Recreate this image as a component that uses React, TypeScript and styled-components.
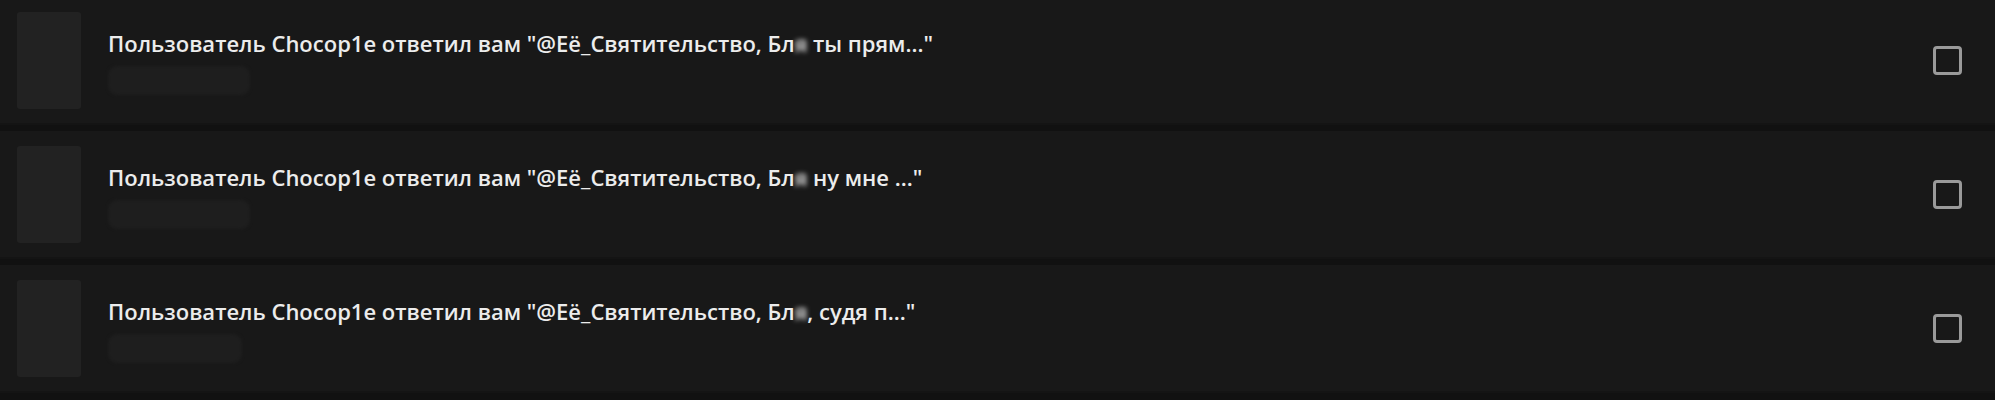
import React from "react";
import styled, { createGlobalStyle } from "styled-components";

const GlobalStyle = createGlobalStyle`
  html, body {
    margin: 0;
    padding: 0;
    background: #111111;
    overflow: hidden;
  }
  body {
    font-family: "Open Sans", "Noto Sans", sans-serif;
  }
`;

const List = styled.ul`
  list-style: none;
  margin: -3px 0 0;
  padding: 0;
  display: flex;
  flex-direction: column;
  gap: 6px;
  background: #111111;
`;

const Row = styled.li`
  height: 128px;
  box-sizing: border-box;
  display: flex;
  align-items: center;
  padding: 0 33px 0 17px;
  background: #181818;
  border-bottom: 2px solid #141414;
`;

const Thumb = styled.div`
  width: 64px;
  height: 97px;
  flex: none;
  border-radius: 3px;
  background: #222222;
`;

const Body = styled.div`
  flex: 1;
  min-width: 0;
  display: flex;
  flex-direction: column;
  gap: 9px;
  margin-left: 27px;
  margin-top: 4px;
`;

const Title = styled.div`
  font-size: 22px;
  line-height: 28px;
  font-weight: 600;
  color: #ececec;
  white-space: nowrap;
  letter-spacing: 0;
`;

const Censored = styled.span`
  display: inline-block;
  filter: blur(2.5px);
  opacity: 0.9;
  color: #ffffff;
`;

const Meta = styled.div<{ $w: number }>`
  width: ${(p) => p.$w}px;
  height: 29px;
  border-radius: 9px;
  background: #1e1e1e;
  filter: blur(1.5px);
`;

const Check = styled.span`
  width: 29px;
  height: 29px;
  flex: none;
  box-sizing: border-box;
  border: 3px solid #9a9a9a;
  border-radius: 4px;
`;

const items = [
  { tail: " ты прям...\"", meta: 142 },
  { tail: " ну мне ...\"", meta: 142 },
  { tail: ", судя п...\"", meta: 134 },
];

export default function App() {
  return (
    <>
      <GlobalStyle />
      <List>
        {items.map((it, i) => (
          <Row key={i}>
            <Thumb />
            <Body>
              <Title>
                Пользователь Chocop1e ответил вам "@Её_Святительство, Бл
                <Censored>я</Censored>
                {it.tail}
              </Title>
              <Meta $w={it.meta} />
            </Body>
            <Check />
          </Row>
        ))}
      </List>
    </>
  );
}
